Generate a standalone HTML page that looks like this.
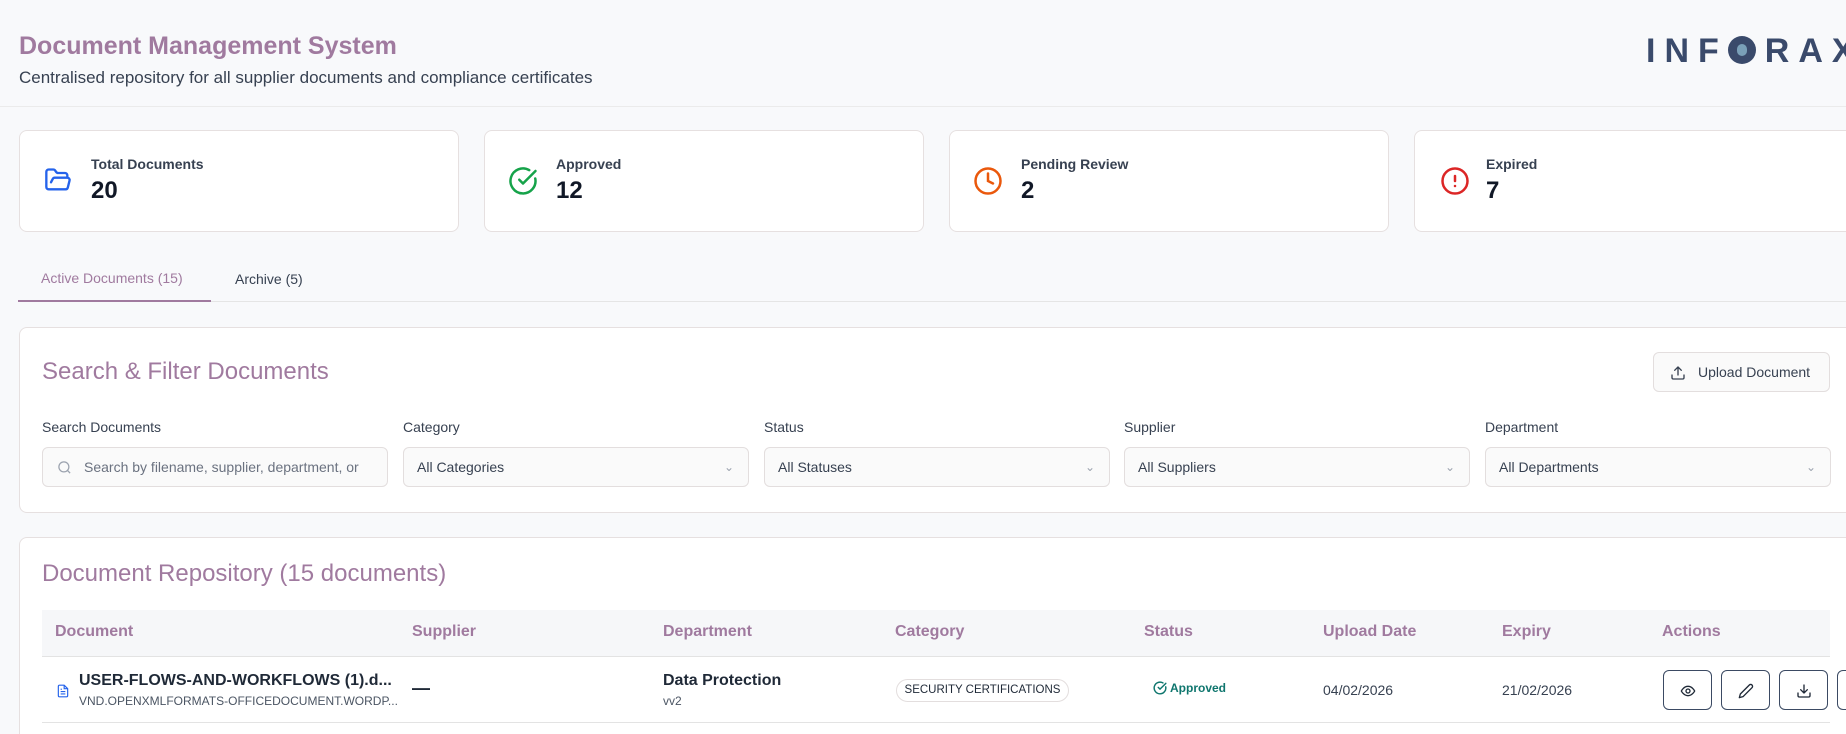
<!DOCTYPE html>
<html><head><meta charset="utf-8"><style>
*{box-sizing:border-box;margin:0;padding:0}
html,body{width:1846px;height:734px;overflow:hidden}
body{background:#f8f9fb;font-family:"Liberation Sans",sans-serif;color:#1f2937;position:relative}
.abs{position:absolute}
.mauve{color:#a07a9f}
.card{position:absolute;background:#fff;border:1px solid #e6e0e0;border-radius:8px}
.lbl{font-size:14px;color:#374151;position:absolute}
.inp{position:absolute;top:447px;height:40px;width:346px;background:#fafafa;border:1px solid #e3dede;border-radius:6px;font-size:14px;color:#374151;line-height:38px;padding-left:13px}
.inp .chev{position:absolute;right:14px;top:0;color:#9ca3af;font-size:12px}
.th{position:absolute;top:623px;font-size:16px;font-weight:bold;color:#a07a9f}
.btn{position:absolute;top:670px;width:49px;height:40px;border:1px solid #3b4a63;border-radius:6px;background:#fff}
.btn svg{position:absolute;left:16px;top:12px}
</style></head><body>
<div class="abs mauve" style="left:19px;top:32px;font-size:25px;font-weight:bold">Document Management System</div>
<div class="abs" style="left:19px;top:68px;font-size:17px;color:#374151">Centralised repository for all supplier documents and compliance certificates</div>
<div class="abs" style="left:1646px;top:32px;font-size:34px;font-weight:bold;color:#3a4a6b;letter-spacing:9px;white-space:nowrap">INF<span style="display:inline-block;width:28px;height:28px;border-radius:50%;background:#3a4a6b;position:relative;top:2px;margin-right:9px"><span style="position:absolute;left:9px;top:8px;width:10px;height:12px;border-radius:5px;background:#7aa0b8"></span></span>RAX</div>
<div class="abs" style="left:0;top:106px;width:1846px;height:1px;background:#ebebeb"></div>

<div class="card" style="left:19px;top:130px;width:440px;height:102px"></div>
<div class="card" style="left:484px;top:130px;width:440px;height:102px"></div>
<div class="card" style="left:949px;top:130px;width:440px;height:102px"></div>
<div class="card" style="left:1414px;top:130px;width:460px;height:102px"></div>
<svg class="abs" style="left:44px;top:166px" width="28" height="28" viewBox="0 0 24 24" fill="none" stroke="#2563eb" stroke-width="2" stroke-linecap="round" stroke-linejoin="round"><path d="M6 14l1.5-2.9A2 2 0 0 1 9.2 10H20a2 2 0 0 1 1.9 2.5l-1.5 6A2 2 0 0 1 18.5 20H4a2 2 0 0 1-2-2V5a2 2 0 0 1 2-2h3.9a2 2 0 0 1 1.7.9l.8 1.2a2 2 0 0 0 1.7.9H18a2 2 0 0 1 2 2v2"/></svg>
<svg class="abs" style="left:508px;top:166px" width="30" height="30" viewBox="0 0 24 24" fill="none" stroke="#16a34a" stroke-width="2" stroke-linecap="round" stroke-linejoin="round"><path d="M21.8 10A10 10 0 1 1 17 3.3"/><path d="M9 11l3 3L22 4"/></svg>
<svg class="abs" style="left:973px;top:166px" width="30" height="30" viewBox="0 0 24 24" fill="none" stroke="#ea580c" stroke-width="2" stroke-linecap="round"><circle cx="12" cy="12" r="10"/><path d="M12 6v6l4 2"/></svg>
<svg class="abs" style="left:1440px;top:166px" width="30" height="30" viewBox="0 0 24 24" fill="none" stroke="#dc2626" stroke-width="2" stroke-linecap="round"><circle cx="12" cy="12" r="10"/><path d="M12 8v4M12 16h.01"/></svg>
<div class="abs" style="left:91px;top:156px;font-size:14px;font-weight:bold;color:#374151">Total Documents</div>
<div class="abs" style="left:91px;top:177px;font-size:24px;font-weight:bold;color:#111827">20</div>
<div class="abs" style="left:556px;top:156px;font-size:14px;font-weight:bold;color:#374151">Approved</div>
<div class="abs" style="left:556px;top:177px;font-size:24px;font-weight:bold;color:#111827">12</div>
<div class="abs" style="left:1021px;top:156px;font-size:14px;font-weight:bold;color:#374151">Pending Review</div>
<div class="abs" style="left:1021px;top:177px;font-size:24px;font-weight:bold;color:#111827">2</div>
<div class="abs" style="left:1486px;top:156px;font-size:14px;font-weight:bold;color:#374151">Expired</div>
<div class="abs" style="left:1486px;top:177px;font-size:24px;font-weight:bold;color:#111827">7</div>

<div class="abs mauve" style="left:41px;top:270px;font-size:14px">Active Documents (15)</div>
<div class="abs" style="left:235px;top:271px;font-size:14px;color:#374151">Archive (5)</div>
<div class="abs" style="left:18px;top:301px;width:1828px;height:1px;background:#e5e5e5"></div>
<div class="abs" style="left:18px;top:300px;width:193px;height:2px;background:#a07a9f"></div>

<div class="card" style="left:19px;top:327px;width:1860px;height:186px"></div>
<div class="abs mauve" style="left:42px;top:358px;font-size:24px">Search &amp; Filter Documents</div>
<div class="abs" style="left:1653px;top:352px;width:177px;height:40px;border:1px solid #e3dede;border-radius:6px;background:#fafafa;font-size:14px;color:#374151;line-height:38px;padding-left:44px">Upload Document
<svg class="abs" style="left:16px;top:12px" width="16" height="16" viewBox="0 0 24 24" fill="none" stroke="#374151" stroke-width="2" stroke-linecap="round" stroke-linejoin="round"><path d="M21 15v4a2 2 0 0 1-2 2H5a2 2 0 0 1-2-2v-4"/><path d="M17 8l-5-5-5 5M12 3v12"/></svg></div>
<div class="lbl" style="left:42px;top:419px">Search Documents</div>
<div class="lbl" style="left:403px;top:419px">Category</div>
<div class="lbl" style="left:764px;top:419px">Status</div>
<div class="lbl" style="left:1124px;top:419px">Supplier</div>
<div class="lbl" style="left:1485px;top:419px">Department</div>
<div class="inp" style="left:42px;padding-left:41px;color:#6b7280;white-space:nowrap;overflow:hidden">Search by filename, supplier, department, or
<svg class="abs" style="left:14px;top:12px" width="15" height="15" viewBox="0 0 24 24" fill="none" stroke="#9ca3af" stroke-width="2"><circle cx="11" cy="11" r="8"/><path d="M21 21l-4.3-4.3"/></svg></div>
<div class="inp" style="left:403px">All Categories<span class="chev">&#8964;</span></div>
<div class="inp" style="left:764px">All Statuses<span class="chev">&#8964;</span></div>
<div class="inp" style="left:1124px">All Suppliers<span class="chev">&#8964;</span></div>
<div class="inp" style="left:1485px">All Departments<span class="chev">&#8964;</span></div>

<div class="card" style="left:19px;top:537px;width:1860px;height:220px"></div>
<div class="abs mauve" style="left:42px;top:560px;font-size:24px">Document Repository (15 documents)</div>
<div class="abs" style="left:42px;top:610px;width:1788px;height:47px;background:#f6f7f9;border-bottom:1px solid #e3e3e3"></div>
<div class="th" style="left:55px">Document</div>
<div class="th" style="left:412px">Supplier</div>
<div class="th" style="left:663px">Department</div>
<div class="th" style="left:895px">Category</div>
<div class="th" style="left:1144px">Status</div>
<div class="th" style="left:1323px">Upload Date</div>
<div class="th" style="left:1502px">Expiry</div>
<div class="th" style="left:1662px">Actions</div>
<div class="abs" style="left:42px;top:722px;width:1788px;height:1px;background:#e3e3e3"></div>
<svg class="abs" style="left:56px;top:683px" width="14" height="16" viewBox="0 0 24 24" fill="none" stroke="#2563eb" stroke-width="2"><path d="M14 2H6a2 2 0 0 0-2 2v16a2 2 0 0 0 2 2h12a2 2 0 0 0 2-2V8z"/><path d="M14 2v6h6M8 13h8M8 17h8M8 9h2"/></svg>
<div class="abs" style="left:79px;top:672px;font-size:16px;font-weight:bold;color:#1f2937">USER-FLOWS-AND-WORKFLOWS (1).d...</div>
<div class="abs" style="left:79px;top:694px;font-size:12px;color:#4b5563">VND.OPENXMLFORMATS-OFFICEDOCUMENT.WORDP...</div>
<div class="abs" style="left:412px;top:678px;font-size:18px;font-weight:bold;color:#1f2937">—</div>
<div class="abs" style="left:663px;top:672px;font-size:16px;font-weight:bold;color:#1f2937">Data Protection</div>
<div class="abs" style="left:663px;top:694px;font-size:12px;color:#4b5563">vv2</div>
<div class="abs" style="left:896px;top:679px;width:173px;height:23px;border:1px solid #e3dede;border-radius:12px;font-size:11.5px;color:#1f2937;line-height:21px;text-align:center">SECURITY CERTIFICATIONS</div>
<svg class="abs" style="left:1153px;top:681px" width="14" height="14" viewBox="0 0 24 24" fill="none" stroke="#0f766e" stroke-width="2.5" stroke-linecap="round" stroke-linejoin="round"><path d="M21.8 10A10 10 0 1 1 17 3.3"/><path d="M9 11l3 3L22 4"/></svg>
<div class="abs" style="left:1170px;top:681px;font-size:12px;font-weight:bold;color:#0f766e">Approved</div>
<div class="abs" style="left:1323px;top:682px;font-size:14px;color:#374151">04/02/2026</div>
<div class="abs" style="left:1502px;top:682px;font-size:14px;color:#374151">21/02/2026</div>
<div class="btn" style="left:1663px"><svg width="16" height="16" viewBox="0 0 24 24" fill="none" stroke="#1f2937" stroke-width="2"><path d="M2 12s3.5-7 10-7 10 7 10 7-3.5 7-10 7S2 12 2 12z"/><circle cx="12" cy="12" r="3"/></svg></div>
<div class="btn" style="left:1721px"><svg width="16" height="16" viewBox="0 0 24 24" fill="none" stroke="#1f2937" stroke-width="2" stroke-linejoin="round"><path d="M17 3a2.8 2.8 0 1 1 4 4L7.5 20.5 2 22l1.5-5.5z"/></svg></div>
<div class="btn" style="left:1779px"><svg width="16" height="16" viewBox="0 0 24 24" fill="none" stroke="#1f2937" stroke-width="2" stroke-linecap="round" stroke-linejoin="round"><path d="M21 15v4a2 2 0 0 1-2 2H5a2 2 0 0 1-2-2v-4"/><path d="M7 10l5 5 5-5M12 15V3"/></svg></div>
<div class="btn" style="left:1837px"></div>
</body></html>
